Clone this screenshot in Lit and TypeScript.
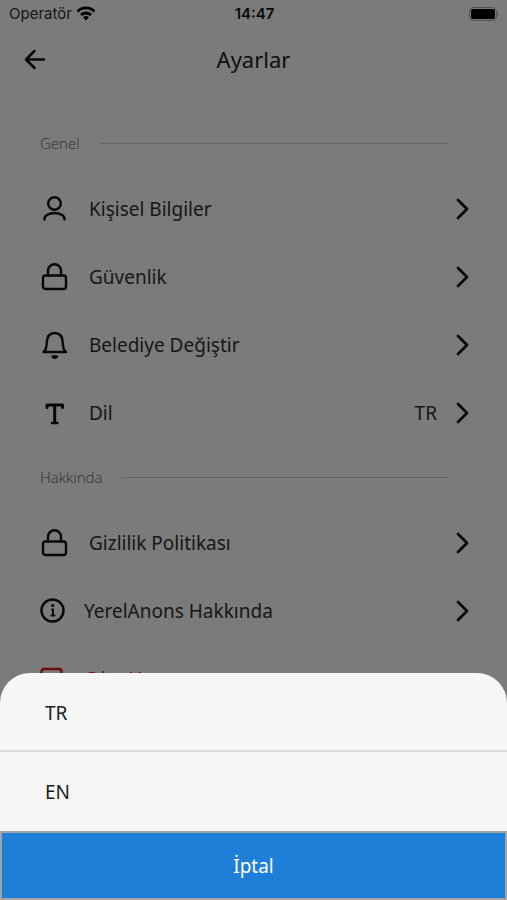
import { LitElement, html, css, svg, nothing } from "lit";
import { customElement, property } from "lit/decorators.js";

const glyphs: Record<string, unknown> = {
  back: svg`<path d="M24 14.500H6.500M14.500 6 6 14.500l8.500 8.500" stroke-width="2.500"/>`,
  user: svg`<circle cx="13.500" cy="8.500" r="6.300"/><path d="M3.500 24.500v-.5c0-3.500 4-6 10-6s10 2.500 10 6v.5"/>`,
  lock: svg`<rect x="2" y="12.500" width="23" height="13.500" rx="2.500"/><path d="M7 12.500V7.700a6.500 6.500 0 0 1 13 0v4.800"/>`,
  bell: svg`<path d="M2.500 21h22.500c-3-2-2.800-5-3.200-9C21.500 5.500 18.500 2 13.700 2S6 5.500 5.700 12c-.3 4-.2 7-3.200 9z"/><path d="M11.500 25.500q2.200 2.800 4.500 0z" fill="currentColor"/>`,
  type: svg`<path d="M6 8.500V6h15.500v2.500M13.700 6v17.500" stroke-width="3"/><path d="M11 24h5.500" stroke-width="2.500"/>`,
  info: svg`<circle cx="11.500" cy="13.500" r="11"/><path d="M11 12.500h1V18M10.500 18.500h3" stroke-width="2"/><circle cx="11.700" cy="8.500" r="1.600" fill="currentColor" stroke="none"/>`,
  exit: svg`<path d="M20.500 10V6.500a2.500 2.500 0 0 0-2.500-2.500H3A2.500 2.500 0 0 0 .5 6.500v16A2.500 2.500 0 0 0 3 25h15a2.500 2.500 0 0 0 2.500-2.500V19M9 14.500h17"/>`,
  next: svg`<path d="m10 5 9 9-9 9" stroke-width="2.800"/>`,
};

const icon = (name: string) => html`<svg class="icon" viewBox="0 0 28 28" aria-hidden="true">${glyphs[name]}</svg>`;

@customElement("settings-row")
class SettingsRow extends LitElement {
  @property() icon = "";
  @property() label = "";
  @property() value = "";
  @property({ type: Boolean }) compact = false;
  @property({ type: Boolean }) danger = false;

  static styles = css`
    :host { display: block; }
    .row {
      display: flex; align-items: center; gap: 20px;
      width: 100%; height: 68px; padding: 1px 31px 0 41px;
      border: 0; background: none; color: #303030;
      font: 19px/28px "Noto Sans", sans-serif; text-align: left;
    }
    .compact { gap: 15px; }
    .danger { color: #f01828; }
    .icon {
      flex: none; width: 28px; height: 28px; fill: none; color: #101010; overflow: visible;
      stroke: currentColor; stroke-width: 2.4px; stroke-linecap: round; stroke-linejoin: round;
    }
    .danger .icon { color: #e01020; }
    .label { flex: 1; }
    .end { display: flex; align-items: center; gap: 11px; }
  `;

  render() {
    return html`<button class="row ${this.compact ? "compact" : ""} ${this.danger ? "danger" : ""}">
      ${icon(this.icon)}
      <span class="label">${this.label}</span>
      <span class="end">${this.value ? html`<span>${this.value}</span>` : nothing}
      ${this.danger ? nothing : icon("next")}</span>
    </button>`;
  }
}

@customElement("app-root")
class AppRoot extends LitElement {
  static styles = css`
    :host {
      display: block; position: relative; height: 100vh; overflow: hidden;
      background: #f6f6f6; color: #303030; font-family: "Noto Sans", sans-serif;
    }
    .status {
      display: grid; grid-template-columns: 1fr auto 1fr; align-items: center;
      height: 28px; padding: 0 7px 0 9px;
      font: 15px/20px Inter, sans-serif;
    }
    .carrier { display: flex; align-items: center; gap: 4px; }
    .wifi { width: 20px; height: 16px; }
    .time { font-weight: 600; color: #101010; }
    .battery { justify-self: end; width: 32px; height: 16px; }
    .header {
      display: grid; grid-template-columns: 28px 1fr 28px; align-items: center;
      height: 62px; padding: 0 20px;
    }
    .title { margin: 0; font-size: 22px; line-height: 30px; font-weight: 400; text-align: center; color: #202020; }
    .back { display: flex; padding: 0; border: 0; background: none; color: #101010; }
    .icon { width: 28px; height: 28px; fill: none; stroke: currentColor; stroke-linecap: round; stroke-linejoin: round; }
    .content { padding-top: 22px; }
    .section { display: flex; align-items: center; gap: 20px; height: 62px; padding: 0 59px 0 40px; }
    .section h2 { margin: 0; font: 300 15px/20px "Open Sans", sans-serif; color: #606060; }
    .rule { flex: 1; height: 1px; background: #cccccc; }
    .scrim { position: absolute; inset: 0; background: rgba(0, 0, 0, 0.5); }
    .sheet {
      position: absolute; left: 0; right: 0; bottom: 0; overflow: hidden;
      display: flex; flex-direction: column;
      background: #f6f6f6; border-radius: 30px 30px 0 0;
    }
    .option, .cancel { border: 0; font: 19px/28px "Noto Sans", sans-serif; }
    .option {
      height: 79px; padding: 2px 45px 0; background: none; color: #202020;
      text-align: left; border-bottom: 2px solid #dcdcdc;
    }
    .option.last { border-bottom-color: #f6f6f6; }
    .cancel { height: 69px; border: 2px solid #a4a4a4; background: #1e7fd8; color: #fff; }
  `;

  render() {
    return html`
      <div class="status">
        <span class="carrier">Operatör
          <svg class="wifi" viewBox="0 0 20 16" aria-hidden="true" fill="none" stroke="#000" stroke-width="2.800">
            <path d="M1.500 5.500a12 12 0 0 1 17 0M5 9a7.200 7.200 0 0 1 10 0"/>
            <path d="M7 11.500a4.300 4.300 0 0 1 6 0l-3 3z" fill="#000" stroke="none"/>
          </svg>
        </span>
        <span class="time">14:47</span>
        <svg class="battery" viewBox="0 0 32 16" aria-hidden="true">
          <rect x="1.500" y="1.500" width="27" height="13" rx="4" fill="none" stroke="#a0a0a0"/>
          <rect x="3" y="3" width="24" height="10" rx="2" fill="#000"/>
          <path d="M30 6q2 2 0 4z" fill="#a0a0a0"/>
        </svg>
      </div>
      <header class="header">
        <button class="back" aria-label="Geri">${icon("back")}</button>
        <h1 class="title">Ayarlar</h1>
      </header>
      <main class="content">
        <div class="section"><h2>Genel</h2><span class="rule"></span></div>
        <settings-row icon="user" label="Kişisel Bilgiler"></settings-row>
        <settings-row icon="lock" label="Güvenlik"></settings-row>
        <settings-row icon="bell" label="Belediye Değiştir"></settings-row>
        <settings-row icon="type" label="Dil" value="TR"></settings-row>
        <div class="section"><h2>Hakkında</h2><span class="rule"></span></div>
        <settings-row icon="lock" label="Gizlilik Politikası"></settings-row>
        <settings-row icon="info" label="YerelAnons Hakkında" compact></settings-row>
        <settings-row icon="exit" label="Çıkış Yap" compact danger></settings-row>
      </main>
      <div class="scrim"></div>
      <div class="sheet" role="dialog" aria-label="Dil">
        <button class="option">TR</button>
        <button class="option last">EN</button>
        <button class="cancel">İptal</button>
      </div>
    `;
  }
}
